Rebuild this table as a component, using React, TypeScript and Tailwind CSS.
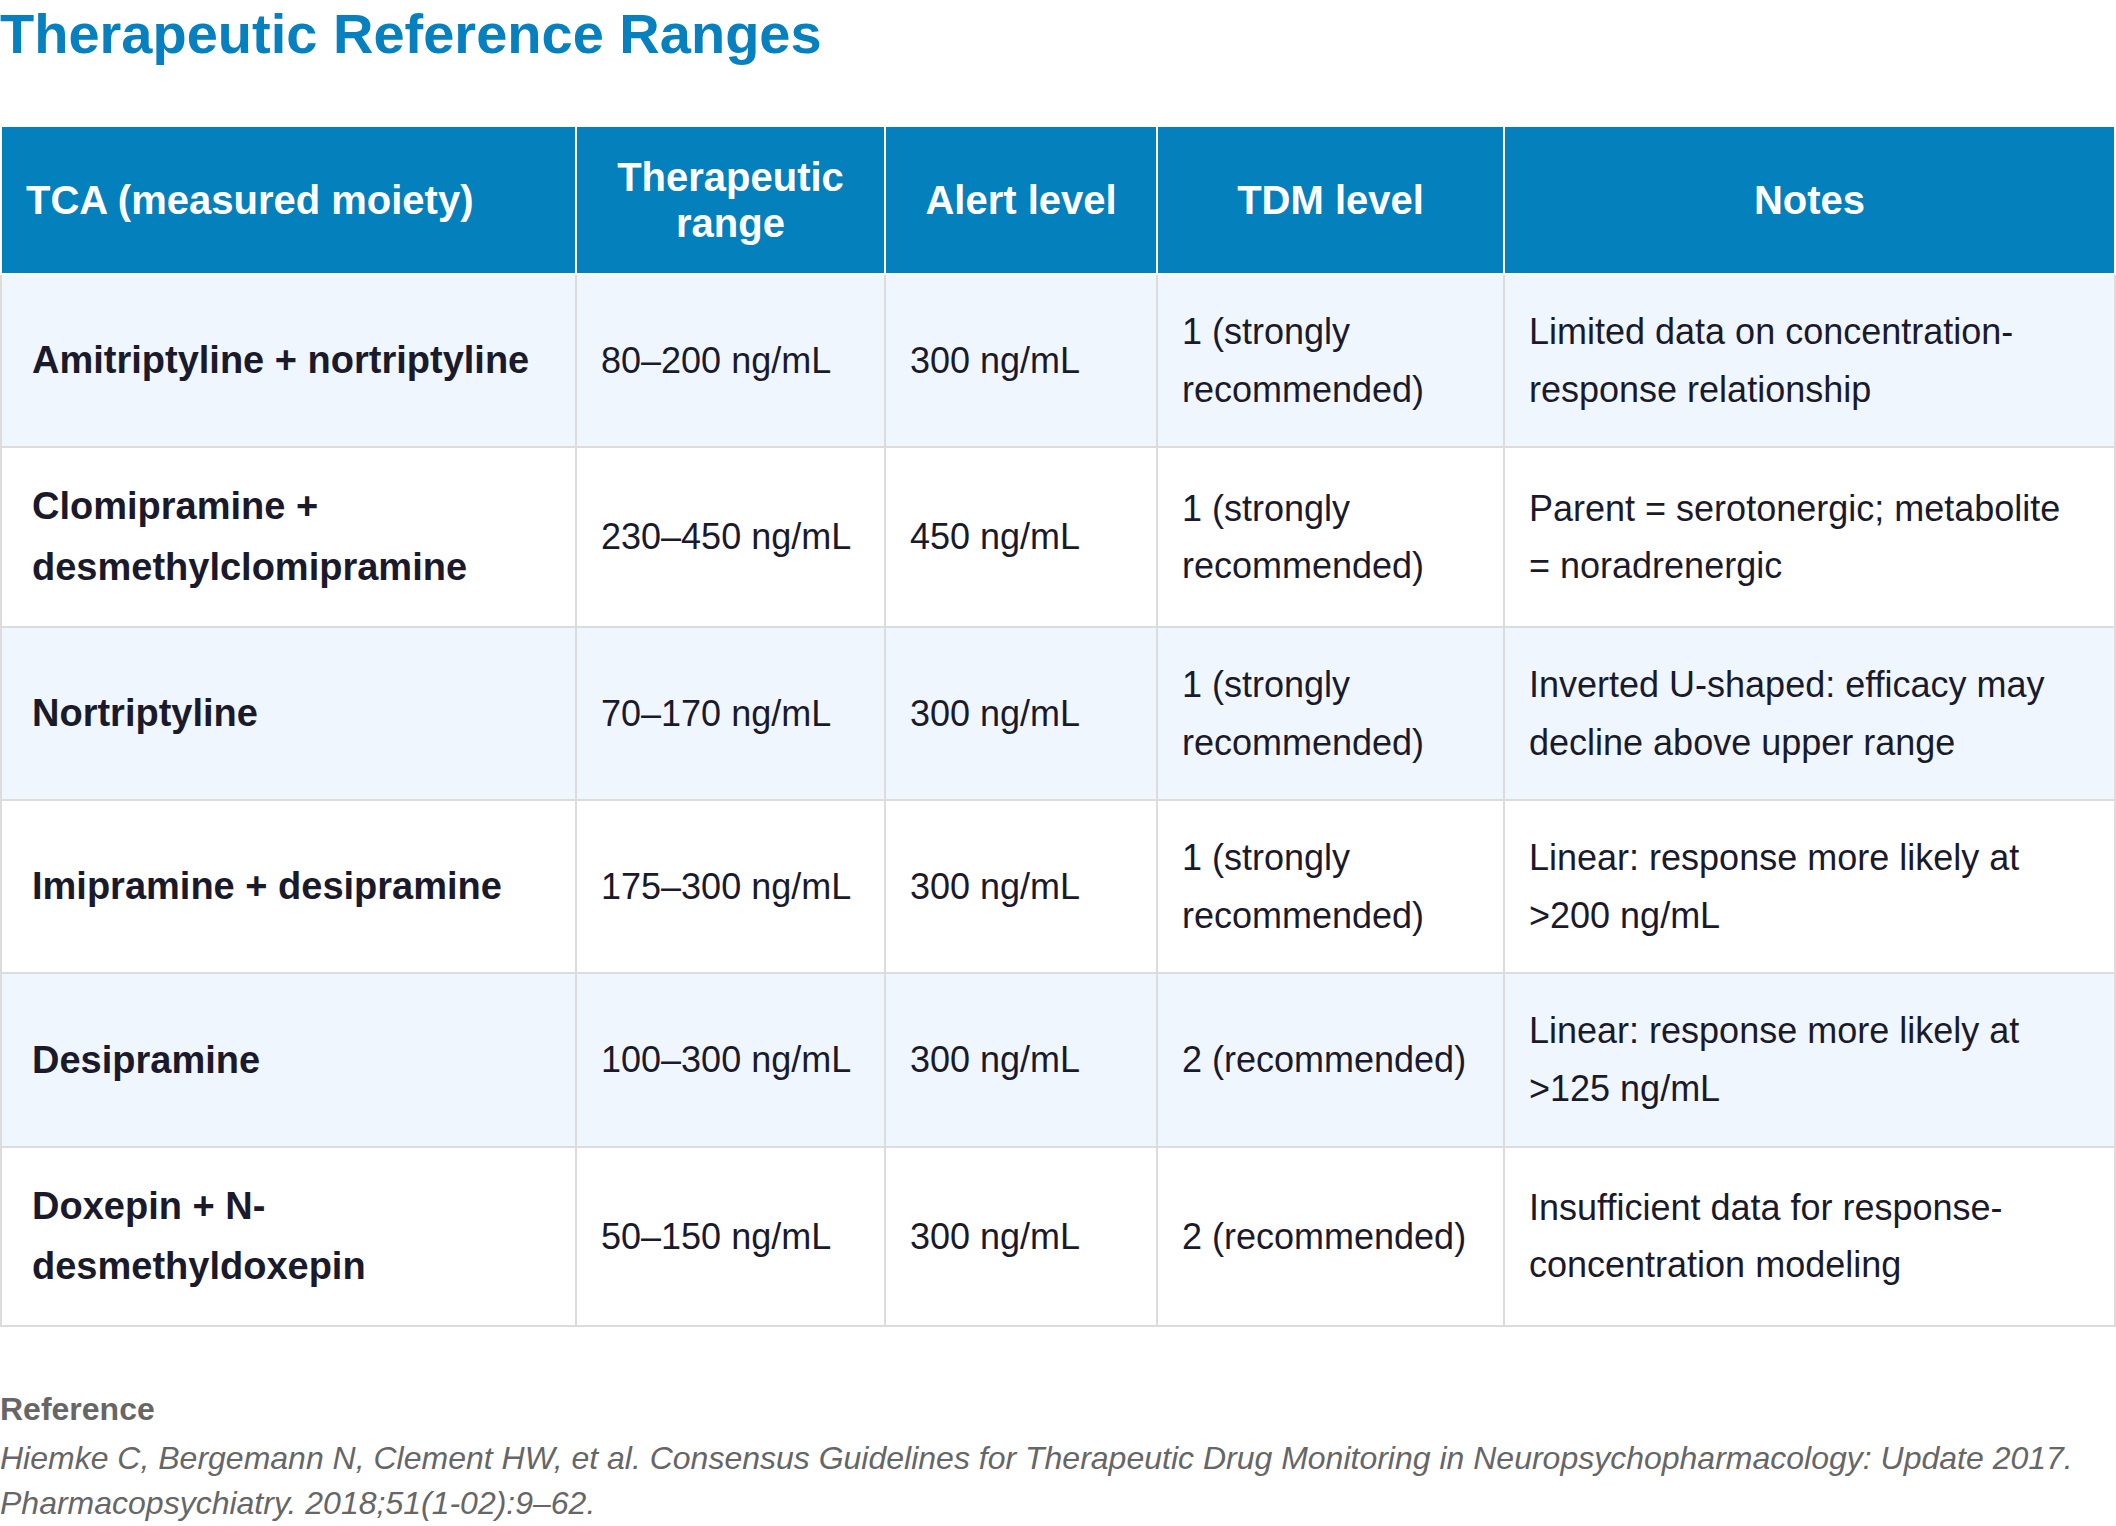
import React from "react";

type Row = {
  drug: string;
  range: string;
  alert: string;
  tdm: string;
  notes: string;
};

const rows: Row[] = [
  {
    drug: "Amitriptyline + nortriptyline",
    range: "80–200 ng/mL",
    alert: "300 ng/mL",
    tdm: "1 (strongly recommended)",
    notes: "Limited data on concentration-response relationship",
  },
  {
    drug: "Clomipramine + desmethylclomipramine",
    range: "230–450 ng/mL",
    alert: "450 ng/mL",
    tdm: "1 (strongly recommended)",
    notes: "Parent = serotonergic; metabolite = noradrenergic",
  },
  {
    drug: "Nortriptyline",
    range: "70–170 ng/mL",
    alert: "300 ng/mL",
    tdm: "1 (strongly recommended)",
    notes: "Inverted U-shaped: efficacy may decline above upper range",
  },
  {
    drug: "Imipramine + desipramine",
    range: "175–300 ng/mL",
    alert: "300 ng/mL",
    tdm: "1 (strongly recommended)",
    notes: "Linear: response more likely at >200 ng/mL",
  },
  {
    drug: "Desipramine",
    range: "100–300 ng/mL",
    alert: "300 ng/mL",
    tdm: "2 (recommended)",
    notes: "Linear: response more likely at >125 ng/mL",
  },
  {
    drug: "Doxepin + N-desmethyldoxepin",
    range: "50–150 ng/mL",
    alert: "300 ng/mL",
    tdm: "2 (recommended)",
    notes: "Insufficient data for response-concentration modeling",
  },
];

export default function App() {
  return (
    <div className="min-h-[1526px] bg-white font-['Liberation_Sans',Arial,sans-serif] text-[#1a1a2b]">
      <h2 className="m-0 text-[56px] font-bold leading-[1.2] text-[#0680bf]">
        Therapeutic Reference Ranges
      </h2>

      <table className="mt-[58px] w-full table-fixed border-collapse">
        <colgroup>
          <col className="w-[575px]" />
          <col className="w-[309px]" />
          <col className="w-[272px]" />
          <col className="w-[347px]" />
          <col />
        </colgroup>
        <thead>
          <tr className="bg-[#0480bd] text-white">
            <th className="border-2 border-white px-6 py-[27px] text-left align-middle text-[40px] font-bold leading-[1.15]">
              TCA (measured moiety)
            </th>
            <th className="border-2 border-white px-6 py-[27px] text-center align-middle text-[40px] font-bold leading-[1.15]">
              Therapeutic range
            </th>
            <th className="border-2 border-white px-6 py-[27px] text-center align-middle text-[40px] font-bold leading-[1.15]">
              Alert level
            </th>
            <th className="border-2 border-white px-6 py-[27px] text-center align-middle text-[40px] font-bold leading-[1.15]">
              TDM level
            </th>
            <th className="border-2 border-white px-6 py-[27px] text-center align-middle text-[40px] font-bold leading-[1.15]">
              Notes
            </th>
          </tr>
        </thead>
        <tbody>
          {rows.map((r, i) => (
            <tr key={r.drug} className={i % 2 === 0 ? "bg-[#eff6fd]" : "bg-white"}>
              <td className="border-2 border-[#dcdcdc] py-7 pl-[30px] pr-6 align-middle text-[38px] font-bold leading-[1.6]">
                {r.drug}
              </td>
              <td className="border-2 border-[#dcdcdc] px-6 py-7 align-middle text-[36px] leading-[1.6]">
                {r.range}
              </td>
              <td className="border-2 border-[#dcdcdc] px-6 py-7 align-middle text-[36px] leading-[1.6]">
                {r.alert}
              </td>
              <td className="border-2 border-[#dcdcdc] px-6 py-7 align-middle text-[36px] leading-[1.6]">
                {r.tdm}
              </td>
              <td className="border-2 border-[#dcdcdc] py-7 pl-6 pr-8 align-middle text-[36px] leading-[1.6]">
                {r.notes}
              </td>
            </tr>
          ))}
        </tbody>
      </table>

      <div className="mt-[60px] text-[32px] leading-[1.4] text-[#666666]">
        <p className="m-0 font-bold">Reference</p>
        <p className="m-0 mt-1 italic">
          Hiemke C, Bergemann N, Clement HW, et al. Consensus Guidelines for Therapeutic Drug
          Monitoring in Neuropsychopharmacology: Update 2017. Pharmacopsychiatry.
          2018;51(1-02):9–62.
        </p>
      </div>
    </div>
  );
}
